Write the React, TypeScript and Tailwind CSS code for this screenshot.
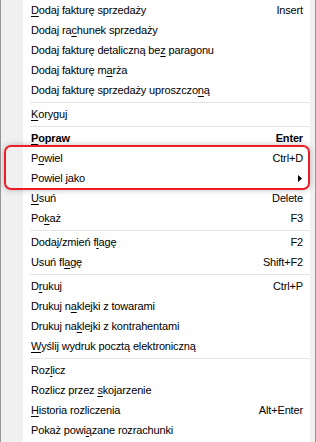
type Item =
  | { sep: true }
  | { sep?: false; label: string; key: number; shortcut?: string; bold?: boolean; sub?: boolean };

const items: Item[] = [
  { label: "Dodaj fakturę sprzedaży", key: 0, shortcut: "Insert" },
  { label: "Dodaj rachunek sprzedaży", key: 8 },
  { label: "Dodaj fakturę detaliczną bez paragonu", key: 27 },
  { label: "Dodaj fakturę marża", key: 15 },
  { label: "Dodaj fakturę sprzedaży uproszczoną", key: 33 },
  { sep: true },
  { label: "Koryguj", key: 0 },
  { sep: true },
  { label: "Popraw", key: 0, shortcut: "Enter", bold: true },
  { label: "Powiel", key: 1, shortcut: "Ctrl+D" },
  { label: "Powiel jako", key: 7, sub: true },
  { label: "Usuń", key: 0, shortcut: "Delete" },
  { label: "Pokaż", key: 2, shortcut: "F3" },
  { sep: true },
  { label: "Dodaj/zmień flagę", key: 13, shortcut: "F2" },
  { label: "Usuń flagę", key: 7, shortcut: "Shift+F2" },
  { sep: true },
  { label: "Drukuj", key: 1, shortcut: "Ctrl+P" },
  { label: "Drukuj naklejki z towarami", key: 8 },
  { label: "Drukuj naklejki z kontrahentami", key: 9 },
  { label: "Wyślij wydruk pocztą elektroniczną", key: 0 },
  { sep: true },
  { label: "Rozlicz", key: 3 },
  { label: "Rozlicz przez skojarzenie", key: 14 },
  { label: "Historia rozliczenia", key: 0, shortcut: "Alt+Enter" },
  { label: "Pokaż powiązane rozrachunki", key: 10 },
  { sep: true },
];

const Label = ({ text, at }: { text: string; at: number }) => (
  <span>
    {text.slice(0, at)}
    <u className="underline-offset-[2px]">{text.charAt(at)}</u>
    {text.slice(at + 1)}
  </span>
);

export default function App() {
  return (
    <div
      className="relative w-[316px] h-[442px] overflow-hidden bg-white flex text-[11px] tracking-[-0.15px] text-black"
      style={{ fontFamily: '"Liberation Sans", Arial, sans-serif' }}
    >
      <div className="w-[1px] bg-[#979797]" />
      <div className="w-[22px] bg-[#f0f0f0]" />
      <div className="flex-1 flex flex-col">
        {items.map((it, i) =>
          it.sep ? (
            <div key={i} className="h-[4px] shrink-0 flex items-center pl-[7px]">
              <div className="h-[1px] w-full bg-[#e3e3e3]" />
            </div>
          ) : (
            <div
              key={i}
              className={`h-[20px] shrink-0 flex items-center justify-between pl-[8px] pr-[7px] ${
                it.bold ? "font-bold" : ""
              }`}
            >
              <Label text={it.label} at={it.key} />
              {it.shortcut && <span>{it.shortcut}</span>}
              {it.sub && (
                <svg width="4" height="7" viewBox="0 0 4 7" className="mr-[1px]">
                  <path d="M0 0 L4 3.5 L0 7 Z" fill="#000" />
                </svg>
              )}
            </div>
          )
        )}
      </div>
      <div className="w-[5px] bg-[#f0f0f0]" />
      <div className="w-[1px] bg-[#979797]" />
      <div className="absolute left-[4px] top-[145px] w-[306px] h-[45px] rounded-[7px] border-2 border-[#ee1c25] shadow-[0_0_6px_rgba(0,0,0,0.25)]" />
    </div>
  );
}
